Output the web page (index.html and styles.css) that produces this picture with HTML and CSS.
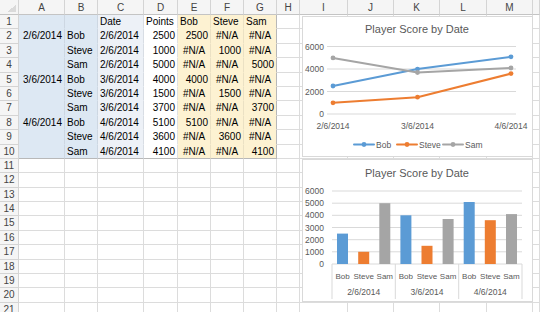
FILE: index.html
```html
<!DOCTYPE html>
<html lang="en">
<head>
  <meta charset="UTF-8">
  <title>Player Score by Date</title>
  <link rel="stylesheet" href="styles.css">
</head>
<body>

  <div class="sheet">
    <!-- column headers -->
    <div class="corner"></div><div class="ch">A</div><div class="ch">B</div><div class="ch">C</div><div class="ch">D</div><div class="ch">E</div><div class="ch">F</div><div class="ch">G</div><div class="ch">H</div><div class="ch">I</div><div class="ch">J</div><div class="ch">K</div><div class="ch">L</div><div class="ch">M</div><div class="ch"></div>

    <!-- data table A1:G10 -->
    <div class="rh">1</div><div class="b"></div><div class="b"></div><div class="p">Date</div><div class="w">Points</div><div class="y">Bob</div><div class="y">Steve</div><div class="y ge">Sam</div><div></div><div></div><div></div><div></div><div></div><div></div><div></div>
    <div class="rh">2</div><div class="b r">2/6/2014</div><div class="b">Bob</div><div class="p">2/6/2014</div><div class="w r">2500</div><div class="y r">2500</div><div class="y m">#N/A</div><div class="y ge m">#N/A</div><div></div><div></div><div></div><div></div><div></div><div></div><div></div>
    <div class="rh">3</div><div class="b"></div><div class="b">Steve</div><div class="p">2/6/2014</div><div class="w r">1000</div><div class="y m">#N/A</div><div class="y r">1000</div><div class="y ge m">#N/A</div><div></div><div></div><div></div><div></div><div></div><div></div><div></div>
    <div class="rh">4</div><div class="b"></div><div class="b">Sam</div><div class="p">2/6/2014</div><div class="w r">5000</div><div class="y m">#N/A</div><div class="y m">#N/A</div><div class="y ge r">5000</div><div></div><div></div><div></div><div></div><div></div><div></div><div></div>
    <div class="rh">5</div><div class="b r">3/6/2014</div><div class="b">Bob</div><div class="p">3/6/2014</div><div class="w r">4000</div><div class="y r">4000</div><div class="y m">#N/A</div><div class="y ge m">#N/A</div><div></div><div></div><div></div><div></div><div></div><div></div><div></div>
    <div class="rh">6</div><div class="b"></div><div class="b">Steve</div><div class="p">3/6/2014</div><div class="w r">1500</div><div class="y m">#N/A</div><div class="y r">1500</div><div class="y ge m">#N/A</div><div></div><div></div><div></div><div></div><div></div><div></div><div></div>
    <div class="rh">7</div><div class="b"></div><div class="b">Sam</div><div class="p">3/6/2014</div><div class="w r">3700</div><div class="y m">#N/A</div><div class="y m">#N/A</div><div class="y ge r">3700</div><div></div><div></div><div></div><div></div><div></div><div></div><div></div>
    <div class="rh">8</div><div class="b r">4/6/2014</div><div class="b">Bob</div><div class="p">4/6/2014</div><div class="w r">5100</div><div class="y r">5100</div><div class="y m">#N/A</div><div class="y ge m">#N/A</div><div></div><div></div><div></div><div></div><div></div><div></div><div></div>
    <div class="rh">9</div><div class="b"></div><div class="b">Steve</div><div class="p">4/6/2014</div><div class="w r">3600</div><div class="y m">#N/A</div><div class="y r">3600</div><div class="y ge m">#N/A</div><div></div><div></div><div></div><div></div><div></div><div></div><div></div>
    <div class="rh">10</div><div class="b end"></div><div class="b end">Sam</div><div class="p end">4/6/2014</div><div class="w r end">4100</div><div class="y m end">#N/A</div><div class="y m end">#N/A</div><div class="y ge r end">4100</div><div></div><div></div><div></div><div></div><div></div><div></div><div></div>

    <!-- empty rows -->
    <div class="rh">11</div><div></div><div></div><div></div><div></div><div></div><div></div><div></div><div></div><div></div><div></div><div></div><div></div><div></div><div></div>
    <div class="rh">12</div><div></div><div></div><div></div><div></div><div></div><div></div><div></div><div></div><div></div><div></div><div></div><div></div><div></div><div></div>
    <div class="rh">13</div><div></div><div></div><div></div><div></div><div></div><div></div><div></div><div></div><div></div><div></div><div></div><div></div><div></div><div></div>
    <div class="rh">14</div><div></div><div></div><div></div><div></div><div></div><div></div><div></div><div></div><div></div><div></div><div></div><div></div><div></div><div></div>
    <div class="rh">15</div><div></div><div></div><div></div><div></div><div></div><div></div><div></div><div></div><div></div><div></div><div></div><div></div><div></div><div></div>
    <div class="rh">16</div><div></div><div></div><div></div><div></div><div></div><div></div><div></div><div></div><div></div><div></div><div></div><div></div><div></div><div></div>
    <div class="rh">17</div><div></div><div></div><div></div><div></div><div></div><div></div><div></div><div></div><div></div><div></div><div></div><div></div><div></div><div></div>
    <div class="rh">18</div><div></div><div></div><div></div><div></div><div></div><div></div><div></div><div></div><div></div><div></div><div></div><div></div><div></div><div></div>
    <div class="rh">19</div><div></div><div></div><div></div><div></div><div></div><div></div><div></div><div></div><div></div><div></div><div></div><div></div><div></div><div></div>
    <div class="rh">20</div><div></div><div></div><div></div><div></div><div></div><div></div><div></div><div></div><div></div><div></div><div></div><div></div><div></div><div></div>
    <div class="rh">21</div><div></div><div></div><div></div><div></div><div></div><div></div><div></div><div></div><div></div><div></div><div></div><div></div><div></div><div></div>

    <!-- line chart (floats over I1:M10) -->
    <svg class="chart chart-line" width="231" height="141" viewBox="0 0 231 141">
      <rect class="frame" x="0.5" y="0.5" width="230" height="140"/>
      <text class="title" x="115" y="17">Player Score by Date</text>
      <g class="grid">
        <line x1="25" x2="214" y1="30.5" y2="30.5"/>
        <line x1="25" x2="214" y1="53" y2="53"/>
        <line x1="25" x2="214" y1="75.5" y2="75.5"/>
        <line x1="25" x2="214" y1="98" y2="98"/>
      </g>
      <text class="ylab" x="22" y="33.5">6000</text>
      <text class="ylab" x="22" y="56">4000</text>
      <text class="ylab" x="22" y="78.5">2000</text>
      <text class="ylab" x="22" y="101">0</text>
      <text class="xlab" x="31" y="112.5">2/6/2014</text>
      <text class="xlab" x="115.5" y="112.5">3/6/2014</text>
      <text class="xlab" x="209" y="112.5">4/6/2014</text>

      <polyline class="series bob" points="31,70 115.5,53.1 209,40.8"/>
      <circle class="dot bob" cx="31" cy="70" r="2.4"/><circle class="dot bob" cx="115.5" cy="53.1" r="2.4"/><circle class="dot bob" cx="209" cy="40.8" r="2.4"/>
      <polyline class="series steve" points="31,86.8 115.5,81.2 209,57.6"/>
      <circle class="dot steve" cx="31" cy="86.8" r="2.4"/><circle class="dot steve" cx="115.5" cy="81.2" r="2.4"/><circle class="dot steve" cx="209" cy="57.6" r="2.4"/>
      <polyline class="series sam" points="31,41.9 115.5,56.5 209,52"/>
      <circle class="dot sam" cx="31" cy="41.9" r="2.4"/><circle class="dot sam" cx="115.5" cy="56.5" r="2.4"/><circle class="dot sam" cx="209" cy="52" r="2.4"/>

      <!-- legend -->
      <line class="series bob" x1="52" x2="72" y1="128.5" y2="128.5"/><circle class="dot bob" cx="62" cy="128.5" r="2.4"/>
      <text x="74" y="131.5">Bob</text>
      <line class="series steve" x1="95" x2="115" y1="128.5" y2="128.5"/><circle class="dot steve" cx="105" cy="128.5" r="2.4"/>
      <text x="117" y="131.5">Steve</text>
      <line class="series sam" x1="141" x2="161" y1="128.5" y2="128.5"/><circle class="dot sam" cx="151" cy="128.5" r="2.4"/>
      <text x="163" y="131.5">Sam</text>
    </svg>

    <!-- clustered column chart (floats over I11:M20) -->
    <svg class="chart chart-bar" width="231" height="143" viewBox="0 0 231 143">
      <rect class="frame" x="0.5" y="0.5" width="230" height="142"/>
      <text class="title" x="115" y="18">Player Score by Date</text>
      <g class="grid">
        <line x1="30" x2="220" y1="32" y2="32"/>
        <line x1="30" x2="220" y1="44.2" y2="44.2"/>
        <line x1="30" x2="220" y1="56.3" y2="56.3"/>
        <line x1="30" x2="220" y1="68.5" y2="68.5"/>
        <line x1="30" x2="220" y1="80.7" y2="80.7"/>
        <line x1="30" x2="220" y1="92.8" y2="92.8"/>
        <line x1="30" x2="220" y1="105" y2="105"/>
        <line x1="30" x2="30" y1="105" y2="140"/>
        <line x1="93.3" x2="93.3" y1="105" y2="140"/>
        <line x1="156.7" x2="156.7" y1="105" y2="140"/>
        <line x1="220" x2="220" y1="105" y2="140"/>
      </g>
      <text class="ylab" x="22" y="35">6000</text>
      <text class="ylab" x="22" y="47.2">5000</text>
      <text class="ylab" x="22" y="59.3">4000</text>
      <text class="ylab" x="22" y="71.5">3000</text>
      <text class="ylab" x="22" y="83.7">2000</text>
      <text class="ylab" x="22" y="95.8">1000</text>
      <text class="ylab" x="22" y="108">0</text>

      <rect class="bar bob" x="35" y="74.6" width="11" height="30.4"/>
      <rect class="bar steve" x="56.2" y="92.8" width="11" height="12.2"/>
      <rect class="bar sam" x="77.3" y="44.2" width="11" height="60.8"/>
      <rect class="bar bob" x="98.4" y="56.3" width="11" height="48.7"/>
      <rect class="bar steve" x="119.5" y="86.8" width="11" height="18.2"/>
      <rect class="bar sam" x="140.6" y="60" width="11" height="45"/>
      <rect class="bar bob" x="161.7" y="43" width="11" height="62"/>
      <rect class="bar steve" x="182.8" y="61.2" width="11" height="43.8"/>
      <rect class="bar sam" x="204" y="55.1" width="11" height="49.9"/>

      <text class="xlab sub" x="40.6" y="119.5">Bob</text>
      <text class="xlab sub" x="61.7" y="119.5">Steve</text>
      <text class="xlab sub" x="82.8" y="119.5">Sam</text>
      <text class="xlab sub" x="103.9" y="119.5">Bob</text>
      <text class="xlab sub" x="125" y="119.5">Steve</text>
      <text class="xlab sub" x="146.1" y="119.5">Sam</text>
      <text class="xlab sub" x="167.2" y="119.5">Bob</text>
      <text class="xlab sub" x="188.3" y="119.5">Steve</text>
      <text class="xlab sub" x="209.5" y="119.5">Sam</text>
      <text class="xlab" x="61.7" y="136">2/6/2014</text>
      <text class="xlab" x="125" y="136">3/6/2014</text>
      <text class="xlab" x="188.3" y="136">4/6/2014</text>
    </svg>
  </div>

</body>
</html>
```

FILE: styles.css
```css
body {
  margin: 0;
  background: #fff;
  overflow: hidden;
  font-family: "Liberation Sans", Arial, sans-serif;
}

/* Grade da planilha */
.sheet {
  position: relative;
  display: grid;
  grid-template-columns: 19px 46px 33px 46px 34px 33px 33px 33px 23px 48px 46px 46px 47px 46px 1fr;
  grid-template-rows: 15px repeat(21, 14.4px);
}

.sheet > div {
  box-sizing: border-box;
  border-right: 1px solid #dcdcdc;
  border-bottom: 1px solid #dcdcdc;
  padding: 0 2px;
  font-size: 10px;
  line-height: 13.6px;
  white-space: nowrap;
  overflow: hidden;
  color: #000;
}

/* Cabeçalhos */
.sheet > .ch,
.sheet > .rh,
.sheet > .corner {
  background: #f5f5f5;
  border-color: #d4d4d4;
  color: #444;
  text-align: center;
  padding: 0;
}

.sheet > .ch {
  line-height: 15px;
  border-bottom-color: #c4c4c4;
}

.sheet > .corner {
  border-bottom-color: #c4c4c4;
  background: linear-gradient(135deg, transparent 50%, #dadada 50%) right 2px bottom 2px / 8px 8px no-repeat, #f5f5f5;
}

/* Preenchimentos das células */
.sheet > .b {
  background: #dde8f3;
  border-bottom-color: transparent;
  border-right-color: #cdd7e2;
}

.sheet > .p {
  background: #edf1f7;
  border-bottom-color: transparent;
  border-right-color: #d8dde4;
}

.sheet > .w {
  background: #fff;
  border-bottom-color: transparent;
  border-right-color: #e0e0e0;
}

.sheet > .y {
  background: #fdf2d2;
  border-bottom-color: transparent;
  border-right-color: #ebe1c4;
}

.sheet > .ge {
  border-right-color: #b8b8b8;
}

.sheet > .end {
  border-bottom-color: #b8b8b8;
}

.r { text-align: right; }
.m { text-align: center; }

/* Gráficos */
.chart {
  position: absolute;
  left: 302px;
}

.chart-line { top: 16px; }
.chart-bar { top: 159px; }

.chart text {
  font-family: "Liberation Sans", Arial, sans-serif;
  font-size: 8.5px;
  fill: #595959;
}

.chart .title {
  font-size: 11px;
  text-anchor: middle;
}

.chart .ylab { text-anchor: end; }
.chart .xlab { text-anchor: middle; }
.chart .sub { font-size: 8px; }

.frame {
  fill: #fff;
  stroke: #d9d9d9;
}

.grid line {
  stroke: #d9d9d9;
  stroke-width: 1;
}

.series {
  fill: none;
  stroke-width: 2;
  stroke-linejoin: round;
  stroke-linecap: round;
}

.series.bob { stroke: #5b9bd5; }
.series.steve { stroke: #ed7d31; }
.series.sam { stroke: #a5a5a5; }

.dot.bob, .bar.bob { fill: #5b9bd5; }
.dot.steve, .bar.steve { fill: #ed7d31; }
.dot.sam, .bar.sam { fill: #a5a5a5; }
```
